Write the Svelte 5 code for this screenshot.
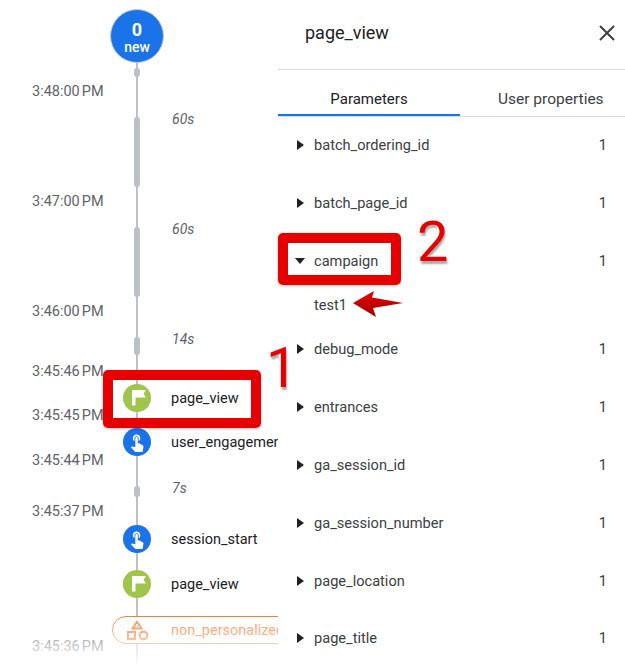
<script>
  const times = [
    { label: '3:48:00 PM', y: 92 },
    { label: '3:47:00 PM', y: 202 },
    { label: '3:46:00 PM', y: 312 },
    { label: '3:45:46 PM', y: 372 },
    { label: '3:45:45 PM', y: 416 },
    { label: '3:45:44 PM', y: 461 },
    { label: '3:45:37 PM', y: 512 },
    { label: '3:45:36 PM', y: 647 },
  ];

  const gaps = [
    { label: '60s', y: 119 },
    { label: '60s', y: 229 },
    { label: '14s', y: 339 },
    { label: '7s', y: 488 },
  ];

  const bars = [
    { top: 68, height: 9 },
    { top: 117, height: 70 },
    { top: 227, height: 70 },
    { top: 337, height: 18 },
    { top: 486, height: 11 },
  ];

  const events = [
    { name: 'page_view', y: 398, kind: 'flag' },
    { name: 'user_engagement', y: 442, kind: 'touch' },
    { name: 'session_start', y: 539, kind: 'touch' },
    { name: 'page_view', y: 584, kind: 'flag' },
  ];

  const params = [
    { name: 'batch_ordering_id' },
    { name: 'batch_page_id' },
    { name: 'campaign', open: true, value: 'test1' },
    { name: 'debug_mode' },
    { name: 'entrances' },
    { name: 'ga_session_id' },
    { name: 'ga_session_number' },
    { name: 'page_location' },
    { name: 'page_title' },
  ];
</script>

<div class="page">
  <section class="timeline">
    <div class="spine"></div>
    {#each bars as bar}
      <div class="bar" style="top: {bar.top}px; height: {bar.height}px"></div>
    {/each}

    <div class="bubble">
      <strong>0</strong>
      <span>new</span>
    </div>

    {#each times as time}
      <div class="time" style="top: {time.y}px">{time.label}</div>
    {/each}

    {#each gaps as gap}
      <div class="gap" style="top: {gap.y}px">{gap.label}</div>
    {/each}

    {#each events as event}
      <div class="event" style="top: {event.y}px">
        <span class="dot {event.kind}">
          {#if event.kind === 'flag'}
            <svg viewBox="0 0 28 28" width="28" height="28">
              <path d="M9 6h14l-2.500 3.750 2.500 3.750h-10.500v8h-3.500z" fill="#fff" />
            </svg>
          {:else}
            <svg viewBox="0 0 24 24" width="20" height="20">
              <path fill="#fff" d="M9 11.240V7.500C9 6.120 10.120 5 11.500 5S14 6.120 14 7.500v3.740c1.210-.810 2-2.180 2-3.740C16 5.010 13.990 3 11.500 3S7 5.010 7 7.500c0 1.560.790 2.930 2 3.740zm9.840 4.630l-4.540-2.260c-.170-.070-.350-.110-.540-.110H13v-6c0-.830-.670-1.500-1.500-1.500S10 6.670 10 7.500v10.740l-3.430-.720c-.080-.010-.150-.030-.240-.030-.310 0-.590.130-.790.330l-.790.800 4.940 4.940c.270.270.650.440 1.060.440h6.790c.750 0 1.330-.550 1.440-1.280l.750-5.270c.010-.070.020-.140.020-.200 0-.620-.380-1.160-.910-1.380z" />
            </svg>
          {/if}
        </span>
        <span class="event-name">{event.name}</span>
      </div>
    {/each}

    <div class="pill">
      <svg viewBox="0 0 24 24" width="24" height="24" fill="none" stroke="#ff7a33" stroke-width="2">
        <path d="M11 4l4.500 6.500h-9z" />
        <rect x="2" y="14" width="7" height="7" />
        <circle cx="17.500" cy="17.500" r="3.800" />
      </svg>
      <span>non_personalized_ads</span>
    </div>
    <div class="fade"></div>
  </section>

  <section class="panel">
    <header class="panel-head">
      <h2>page_view</h2>
      <svg class="close" viewBox="0 0 16 16" width="16" height="16">
        <path d="M1 1l14 14M15 1L1 15" stroke="#3c4043" stroke-width="2" />
      </svg>
    </header>

    <nav class="tabs">
      <div class="tab active">Parameters</div>
      <div class="tab other">User properties</div>
    </nav>

    <ul class="params">
      {#each params as param}
        <li>
          <div class="param">
            <span class="caret" class:open={param.open}></span>
            <span class="param-name">{param.name}</span>
            <span class="count">1</span>
          </div>
          {#if param.value}
            <div class="param-value">{param.value}</div>
          {/if}
        </li>
      {/each}
    </ul>
  </section>

  <div class="mark mark-event"></div>
  <div class="mark mark-param"></div>
  <div class="num num-1">1</div>
  <div class="num num-2">2</div>
  <svg class="arrow" viewBox="0 0 52 30" width="52" height="30">
    <defs>
      <linearGradient id="arrow-red" x1="0" y1="0" x2="0" y2="1">
        <stop offset="0" stop-color="#e80000" />
        <stop offset="1" stop-color="#a00000" />
      </linearGradient>
    </defs>
    <path d="M1 14L22 2l-2 6.500 31 5.500-30 5 3 9z" fill="url(#arrow-red)" />
  </svg>
</div>

<style>
  :global(body) {
    margin: 0;
    background: #fff;
  }

  .page {
    position: relative;
    display: flex;
    width: 625px;
    height: 667px;
    overflow: hidden;
    font-family: Roboto, "Liberation Sans", sans-serif;
    font-size: 14.500px;
    color: #202124;
  }

  .timeline {
    position: relative;
    flex: 0 0 278px;
    overflow: hidden;
  }

  .spine {
    position: absolute;
    left: 136px;
    top: 60px;
    bottom: 0;
    width: 2px;
    background: #bdc1c6;
  }

  .bar {
    position: absolute;
    left: 134px;
    width: 6px;
    border-radius: 3px;
    background: #bdc1c6;
  }

  .bubble {
    position: absolute;
    left: 110px;
    top: 9px;
    box-sizing: border-box;
    width: 54px;
    height: 54px;
    padding-top: 11px;
    border-radius: 50%;
    border: 1px solid #c6cdd6;
    background: #1a73e8;
    color: #fff;
    display: flex;
    flex-direction: column;
    align-items: center;
  }

  .bubble strong {
    font-size: 18px;
    font-weight: 700;
    line-height: 18px;
  }

  .bubble span {
    font-size: 14px;
    font-weight: 500;
    line-height: 16px;
  }

  .time {
    position: absolute;
    left: 32px;
    transform: translateY(-50%);
    color: #5f6368;
    font-size: 14.500px;
    line-height: 20px;
    word-spacing: -1.500px;
    white-space: nowrap;
  }

  .gap {
    position: absolute;
    left: 172px;
    transform: translateY(-50%);
    color: #5f6368;
    font-size: 14px;
    font-style: italic;
    line-height: 20px;
  }

  .event {
    position: absolute;
    left: 123px;
    display: flex;
    align-items: center;
    gap: 20px;
    transform: translateY(-50%);
    white-space: nowrap;
  }

  .dot {
    display: flex;
    align-items: center;
    justify-content: center;
    width: 28px;
    height: 28px;
    border-radius: 50%;
  }

  .dot.flag { background: #9fc54a; }
  .dot.touch { background: #1a73e8; }

  .pill {
    position: absolute;
    left: 112px;
    top: 616px;
    box-sizing: border-box;
    width: 190px;
    height: 28px;
    padding-left: 13px;
    display: flex;
    align-items: center;
    gap: 21px;
    border: 1px solid #ff7a33;
    border-radius: 14px;
    color: #ff7a33;
    white-space: nowrap;
    background: #fff;
  }

  .pill svg {
    flex: none;
  }

  .fade {
    position: absolute;
    left: 0;
    right: 0;
    top: 618px;
    bottom: 0;
    background: linear-gradient(rgba(255, 255, 255, 0.15), #fff);
  }

  .panel {
    flex: 1;
    min-width: 0;
    background: #fff;
  }

  .panel-head {
    display: flex;
    align-items: center;
    justify-content: space-between;
    box-sizing: border-box;
    height: 70px;
    padding: 0 10px 4px 27px;
    border-bottom: 1px solid #dadce0;
  }

  h2 {
    margin: 0;
    font-size: 18px;
    font-weight: 400;
    color: #202124;
  }

  .tabs {
    display: flex;
    box-sizing: border-box;
    height: 47px;
    border-bottom: 1px solid #dadce0;
    color: #3c4043;
    font-size: 15px;
  }

  .tab {
    flex: 0 0 182px;
    box-sizing: border-box;
    height: 46px;
    padding-top: 19px;
    text-align: center;
    line-height: 20px;
    white-space: nowrap;
  }

  .tab.active {
    border-bottom: 2px solid #1a73e8;
    color: #202124;
  }

  .tab.other {
    flex: 0 0 165px;
    padding-left: 38px;
    text-align: left;
    font-size: 15.500px;
  }

  .params {
    list-style: none;
    margin: -1px 0 0;
    padding: 0;
    font-size: 14.600px;
  }

  .param {
    display: flex;
    align-items: center;
    height: 57.950px;
    padding: 0 18px 0 19px;
  }

  .caret {
    width: 0;
    height: 0;
    margin-right: 10px;
    border-style: solid;
    border-width: 5.500px 0 5.500px 7px;
    border-color: transparent transparent transparent #202124;
  }

  .caret.open {
    margin: 0 9px 0 -2px;
    border-width: 6px 5.500px 0 5.500px;
    border-color: #202124 transparent transparent transparent;
  }

  .param-name {
    flex: 1;
    color: #3c4043;
  }

  .count {
    color: #3c4043;
  }

  .param-value {
    margin-left: 36px;
    height: 30px;
    line-height: 30px;
    color: #3c4043;
  }

  .mark {
    position: absolute;
    box-sizing: border-box;
    border: 10px solid #e60000;
    border-radius: 5px;
    box-shadow: 0 1px 3px rgba(0, 0, 0, 0.25);
  }

  .mark-event {
    left: 103px;
    top: 370px;
    width: 158px;
    height: 58px;
  }

  .mark-param {
    left: 278px;
    top: 233px;
    width: 123px;
    height: 52px;
  }

  .num {
    position: absolute;
    color: #e60000;
    font-size: 56px;
    font-weight: 400;
    line-height: 56px;
    text-shadow: -2px -1px 1px #fff, 1px 3px 2px #aaa;
  }

  .num-1 {
    left: 266px;
    top: 340px;
  }

  .num-2 {
    left: 417px;
    top: 214px;
  }

  .arrow {
    position: absolute;
    left: 352px;
    top: 289px;
  }
</style>
